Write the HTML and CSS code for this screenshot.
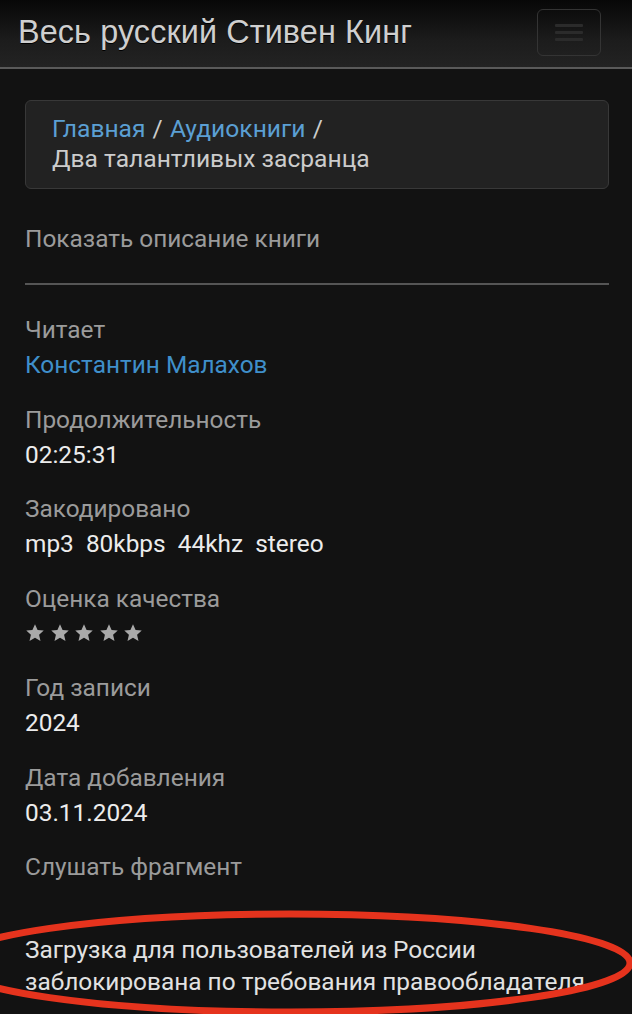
FILE: index.html
```html
<!DOCTYPE html>
<html lang="ru">
<head>
<meta charset="utf-8">
<title>Весь русский Стивен Кинг</title>
<link rel="stylesheet" href="styles.css">
</head>
<body>
<header class="navbar">
  <div class="brand">Весь русский Стивен Кинг</div>
  <button class="toggle" type="button" aria-label="menu">
    <span class="bar"></span><span class="bar"></span><span class="bar"></span>
  </button>
</header>
<main class="content">
  <nav class="crumbs">
    <div><a href="#" class="crumb-link">Главная</a> <span class="sep">/</span> <a href="#" class="crumb-link">Аудиокниги</a> <span class="sep">/</span></div>
    <div class="crumb-current">Два талантливых засранца</div>
  </nav>
  <div class="show-desc">Показать описание книги</div>
  <hr class="divider">
  <dl class="meta">
    <div class="group"><dt>Читает</dt><dd><a href="#" class="reader">Константин Малахов</a></dd></div>
    <div class="group"><dt>Продолжительность</dt><dd>02:25:31</dd></div>
    <div class="group"><dt>Закодировано</dt><dd class="spaced">mp3&nbsp; 80kbps&nbsp; 44khz&nbsp; stereo</dd></div>
    <div class="group"><dt>Оценка качества</dt>
      <dd class="stars">
        <svg viewBox="0 0 24 24" class="star"><path d="M12 1.5l3.1 6.9 7.4.7-5.6 5 1.7 7.4L12 17.6l-6.6 3.9 1.7-7.4-5.6-5 7.4-.7z"/></svg>
        <svg viewBox="0 0 24 24" class="star"><path d="M12 1.5l3.1 6.9 7.4.7-5.6 5 1.7 7.4L12 17.6l-6.6 3.9 1.7-7.4-5.6-5 7.4-.7z"/></svg>
        <svg viewBox="0 0 24 24" class="star"><path d="M12 1.5l3.1 6.9 7.4.7-5.6 5 1.7 7.4L12 17.6l-6.6 3.9 1.7-7.4-5.6-5 7.4-.7z"/></svg>
        <svg viewBox="0 0 24 24" class="star"><path d="M12 1.5l3.1 6.9 7.4.7-5.6 5 1.7 7.4L12 17.6l-6.6 3.9 1.7-7.4-5.6-5 7.4-.7z"/></svg>
        <svg viewBox="0 0 24 24" class="star"><path d="M12 1.5l3.1 6.9 7.4.7-5.6 5 1.7 7.4L12 17.6l-6.6 3.9 1.7-7.4-5.6-5 7.4-.7z"/></svg>
      </dd>
    </div>
    <div class="group"><dt>Год записи</dt><dd>2024</dd></div>
    <div class="group"><dt>Дата добавления</dt><dd>03.11.2024</dd></div>
    <div class="group"><dt>Слушать фрагмент</dt></div>
  </dl>
  <p class="blocked">Загрузка для пользователей из России<br>заблокирована по требования правообладателя</p>
</main>
<svg class="annotation" viewBox="0 0 632 120" preserveAspectRatio="none" aria-hidden="true">
  <ellipse cx="290" cy="61" rx="340" ry="49" fill="none" stroke="#e5331d" stroke-width="7"/>
</svg>
</body>
</html>
```

FILE: styles.css
```css
html, body {
  margin: 0;
  padding: 0;
  background: #121212;
}
body {
  font-family: Roboto, "Noto Sans", sans-serif;
  color: #e4e4e4;
  position: relative;
  min-height: 1014px;
  overflow: hidden;
}
.navbar {
  height: 67px;
  display: flex;
  align-items: center;
  justify-content: space-between;
  padding: 0 31px 0 18px;
  background: linear-gradient(180deg, #070707 0%, #1c1c1c 60%, #232323 100%);
  border-bottom: 2px solid #5a5a5a;
}
.brand {
  font-family: "Liberation Sans", Arial, sans-serif;
  font-size: 32.4px;
  color: #cfcfcf;
  letter-spacing: 0.1px;
  text-shadow: 0 1px 0 #000;
  margin-top: -2px;
}
.toggle {
  width: 64px;
  height: 47px;
  border: 1px solid #343434;
  border-radius: 6px;
  background: transparent;
  display: flex;
  flex-direction: column;
  align-items: center;
  justify-content: center;
  gap: 4px;
  padding: 0;
  margin-top: -2px;
}
.bar {
  display: block;
  width: 28px;
  height: 3px;
  background: #2b2b2b;
  border-radius: 1px;
}
.content {
  padding: 0 23px 0 25px;
}
.crumbs {
  margin-top: 31px;
  background: #222222;
  border: 1px solid #383838;
  border-radius: 6px;
  padding: 13px 26px 14px;
  font-family: Roboto, "Noto Sans", sans-serif;
  font-size: 24.6px;
  line-height: 30px;
  color: #cccccc;
}
.crumb-link {
  color: #5b9fd3;
  text-decoration: none;
}
.sep {
  color: #cccccc;
  margin: 0 1px;
}
.crumb-current {
  color: #cccccc;
}
.show-desc {
  margin-top: 32px;
  font-size: 24.4px;
  line-height: 35px;
  color: #9b9b9b;
}
.divider {
  margin: 27px 0 0;
  border: 0;
  height: 2px;
  background: #555555;
}
.meta {
  margin: 27px 0 0;
}
.group {
  margin-bottom: 19.5px;
}
.meta dt {
  font-size: 24.4px;
  line-height: 35px;
  color: #9b9b9b;
}
.meta dd {
  margin: 0;
  font-size: 24.4px;
  line-height: 35px;
  color: #ececec;
}
.reader {
  color: #3f8fca;
  text-decoration: none;
}
.stars {
  display: flex;
  align-items: center;
  gap: 4.5px;
  height: 35px;
}
.star {
  width: 20px;
  height: 20px;
  fill: #a9a9a9;
}
.blocked {
  margin: 50px 0 0;
  font-size: 24.4px;
  line-height: 32px;
  color: #e2e2e2;
}
.annotation {
  position: absolute;
  left: 0;
  top: 902px;
  width: 632px;
  height: 120px;
  pointer-events: none;
}
```
